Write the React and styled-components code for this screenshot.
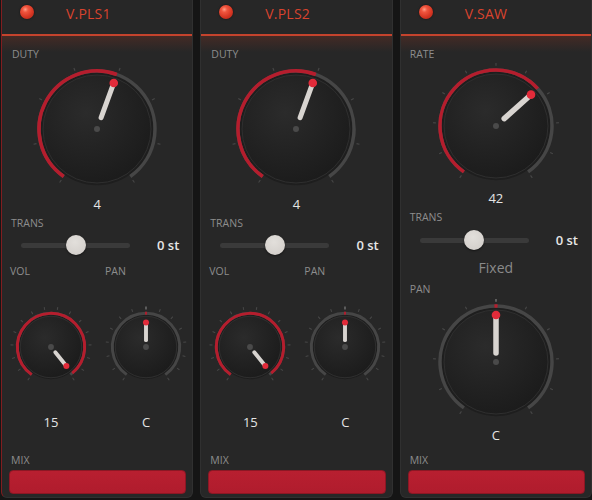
import React, { useId } from 'react';
import styled, { createGlobalStyle } from 'styled-components';

const GlobalStyle = createGlobalStyle`
  html, body { margin: 0; padding: 0; background: #151515; }
  body { font-family: "Open Sans", "Noto Sans", sans-serif; -webkit-font-smoothing: antialiased; }
  * { box-sizing: border-box; }
`;

const Rack = styled.div`
  display: flex;
  gap: 7px;
  height: 500px;
  padding: 0 0 2px 1px;
  background: #151515;
  overflow: hidden;
`;

const Panel = styled.section`
  flex: 1 1 0;
  min-width: 0;
  display: flex;
  flex-direction: column;
  background: #272727;
  border: 1px solid #303030;
  border-top: none;
  border-left-color: ${p => (p.$selected ? '#801d1f' : '#303030')};
  border-radius: 0 0 6px 6px;
  padding-bottom: 3px;
`;

const Header = styled.header`
  height: 36px;
  flex: 0 0 auto;
  display: flex;
  align-items: flex-start;
  padding: 5px 0 0 18px;
  border-bottom: 2px solid #c4432d;
`;

const Led = styled.span`
  width: 14px;
  height: 14px;
  border-radius: 50%;
  flex: 0 0 auto;
  background: radial-gradient(circle at 38% 32%, #ff9c86 0, #f0553e 22%, #d53522 60%, #a8261a 100%);
  box-shadow: 0 0 2px rgba(0, 0, 0, 0.6);
`;

const Title = styled.h2`
  margin: -1px 0 0 32px;
  font-size: 14px;
  line-height: 20px;
  font-weight: 500;
  color: #d9432e;
  letter-spacing: 0.2px;
`;

const Body = styled.div`
  flex: 1 1 auto;
  display: flex;
  flex-direction: column;
  background: linear-gradient(180deg, rgba(120, 48, 34, 0.35) 0, rgba(39, 39, 39, 0) 16px);
`;

const Label = styled.div`
  font-size: 10.5px;
  line-height: 14px;
  color: #8d8d8d;
  padding-left: ${p => p.$inset ?? 9}px;
  margin-top: ${p => p.$mt || 0}px;
`;

const KnobWrap = styled.div`
  display: flex;
  justify-content: center;
  margin-top: ${p => p.$mt || 0}px;
  & > svg { display: block; }
`;

const Value = styled.div`
  text-align: center;
  font-size: 13px;
  line-height: 18px;
  font-weight: 500;
  color: #e4e4e4;
  margin-top: ${p => p.$mt || 0}px;
`;

const Note = styled.div`
  text-align: center;
  font-size: 14px;
  line-height: 19px;
  color: #8a8a8a;
  margin-top: ${p => p.$mt || 0}px;
`;

const SliderRow = styled.div`
  display: flex;
  align-items: center;
  height: 20px;
  padding: 0 13px 0 ${p => p.$inset ?? 19}px;
  margin-top: ${p => p.$mt || 0}px;
`;

const Track = styled.div`
  position: relative;
  width: 109px;
  height: 5px;
  border-radius: 3px;
  background: #3a3a3a;
`;

const Thumb = styled.span`
  position: absolute;
  top: 50%;
  width: 20px;
  height: 20px;
  margin: -10px 0 0 -10px;
  border-radius: 50%;
  background: radial-gradient(circle at 45% 35%, #e2dfdb 0, #d5d1cd 70%, #c6c2be 100%);
  box-shadow: 0 1px 2px rgba(0, 0, 0, 0.5);
`;

const SliderValue = styled.span`
  margin-left: auto;
  font-size: 13px;
  font-weight: 600;
  color: #e6e6e6;
  white-space: nowrap;
`;

const Pair = styled.div`
  display: grid;
  grid-template-columns: 82px 82px;
  column-gap: 13px;
  padding-left: 8px;
  margin-top: ${p => p.$mt || 0}px;
`;

const PairCol = styled.div`
  display: flex;
  flex-direction: column;
`;

const Mix = styled.div`
  margin-top: auto;
  display: flex;
  flex-direction: column;
`;

const MixBar = styled.div`
  height: 24px;
  margin: 3px 6px 0 7px;
  border-radius: 4px;
  background: linear-gradient(180deg, #b81f30 0, #b01c2d 100%);
  border: 1px solid #8c1724;
`;

const SWEEP = 145;

function Knob({ size, r, stroke = 3.5, bodyR, value, mode = 'min', ticks, pStart, pEnd, pWidth, dotR, dotAt }) {
  const gid = useId().replace(/:/g, '');
  const c = size / 2;
  const angle = -SWEEP + value * 2 * SWEEP;
  const pt = (rad, deg) => {
    const a = ((deg - 90) * Math.PI) / 180;
    return [c + rad * Math.cos(a), c + rad * Math.sin(a)];
  };
  const arc = (rad, a0, a1) => {
    const [x0, y0] = pt(rad, a0);
    const [x1, y1] = pt(rad, a1);
    const large = a1 - a0 > 180 ? 1 : 0;
    return `M${x0.toFixed(2)} ${y0.toFixed(2)} A${rad} ${rad} 0 ${large} 1 ${x1.toFixed(2)} ${y1.toFixed(2)}`;
  };
  let a0, a1;
  if (mode === 'center') {
    a0 = Math.min(0, angle);
    a1 = Math.max(0, angle);
    if (a1 - a0 < 3) { a0 -= 1.6; a1 += 1.6; }
  } else {
    a0 = -SWEEP;
    a1 = angle;
  }
  const tickList = [];
  for (let i = 0; i < ticks; i++) {
    const d = -SWEEP + (i * 2 * SWEEP) / (ticks - 1);
    const [x0, y0] = pt(r + stroke / 2 + 2.5, d);
    const [x1, y1] = pt(r + stroke / 2 + 5.5, d);
    const centre = mode === 'center' && Math.abs(d) < 0.5;
    tickList.push(
      <line key={i} x1={x0} y1={y0} x2={x1} y2={y1} stroke={centre ? '#8a8a8a' : '#474747'} strokeWidth="1.1" />
    );
  }
  const [ps, pss] = pt(pStart, angle);
  const [pe, pee] = pt(pEnd, angle);
  const [dx, dy] = pt(dotAt, angle);
  return (
    <svg width={size} height={size} viewBox={`0 0 ${size} ${size}`}>
      <defs>
        <radialGradient id={gid} cx="40%" cy="35%" r="70%">
          <stop offset="0" stopColor="#2b2b2b" />
          <stop offset="1" stopColor="#1b1b1b" />
        </radialGradient>
      </defs>
      {tickList}
      <circle cx={c} cy={c} r={r - stroke / 2} fill="#1e1e1e" />
      <path d={arc(r, -SWEEP, SWEEP)} fill="none" stroke="#464646" strokeWidth={stroke} />
      <path d={arc(r, a0, a1)} fill="none" stroke="#b51d2d" strokeWidth={stroke} />
      <circle cx={c} cy={c} r={bodyR} fill={`url(#${gid})`} stroke="#2f2f2f" strokeWidth="1" />
      <circle cx={c} cy={c} r="3" fill="#4a4a4a" />
      <line x1={ps} y1={pss} x2={pe} y2={pee} stroke="#d8d4d0" strokeWidth={pWidth} strokeLinecap="round" />
      <circle cx={dx} cy={dy} r={dotR} fill="#e22b3a" />
    </svg>
  );
}

const BigKnob = ({ value, ticks, mode, small }) =>
  small ? (
    <Knob size={126} r={56} bodyR={52} value={value} ticks={ticks} mode={mode} pStart={mode === 'center' ? 9 : 11} pEnd={45} pWidth={5.5} dotR={4.3} dotAt={47} />
  ) : (
    <Knob size={132} r={58} bodyR={54} value={value} ticks={ticks} mode={mode} pStart={12} pEnd={47} pWidth={5} dotR={4.3} dotAt={49} />
  );

const SmallKnob = ({ value, ticks, mode }) => (
  <Knob size={84} r={34.5} stroke={3} bodyR={31.5} value={value} ticks={ticks} mode={mode} pStart={7} pEnd={23} pWidth={4} dotR={3.1} dotAt={25} />
);

function Slider({ value, label, mt }) {
  return (
    <SliderRow $mt={mt}>
      <Track>
        <Thumb style={{ left: `${value * 100}%` }} />
      </Track>
      <SliderValue>{label}</SliderValue>
    </SliderRow>
  );
}

function MixSection() {
  return (
    <Mix>
      <Label>MIX</Label>
      <MixBar />
    </Mix>
  );
}

function PulseVoice({ name, selected }) {
  return (
    <Panel $selected={selected}>
      <Header>
        <Led />
        <Title>{name}</Title>
      </Header>
      <Body>
        <Label $mt={11} $inset={10}>DUTY</Label>
        <KnobWrap $mt={2}>
          <BigKnob value={0.569} ticks={8} />
        </KnobWrap>
        <Value>4</Value>
        <Label $mt={3}>TRANS</Label>
        <Slider value={0.5} label="0 st" mt={5} />
        <Pair $mt={9}>
          <PairCol>
            <Label $inset={0}>VOL</Label>
            <KnobWrap $mt={27}>
              <SmallKnob value={0.986} ticks={16} />
            </KnobWrap>
            <Value $mt={24}>15</Value>
          </PairCol>
          <PairCol>
            <Label $inset={0}>PAN</Label>
            <KnobWrap $mt={27}>
              <SmallKnob value={0.5} ticks={15} mode="center" />
            </KnobWrap>
            <Value $mt={24}>C</Value>
          </PairCol>
        </Pair>
        <MixSection />
      </Body>
    </Panel>
  );
}

function SawVoice() {
  return (
    <Panel>
      <Header>
        <Led />
        <Title>V.SAW</Title>
      </Header>
      <Body>
        <Label $mt={11}>RATE</Label>
        <KnobWrap $mt={2}>
          <BigKnob small value={0.666} ticks={11} />
        </KnobWrap>
        <Value>42</Value>
        <Label $mt={3}>TRANS</Label>
        <Slider value={0.5} label="0 st" mt={6} />
        <Note $mt={8}>Fixed</Note>
        <Label $mt={5}>PAN</Label>
        <KnobWrap $mt={3}>
          <BigKnob small value={0.5} ticks={11} mode="center" />
        </KnobWrap>
        <Value $mt={1}>C</Value>
        <MixSection />
      </Body>
    </Panel>
  );
}

export default function App() {
  return (
    <>
      <GlobalStyle />
      <Rack>
        <PulseVoice name="V.PLS1" selected />
        <PulseVoice name="V.PLS2" />
        <SawVoice />
      </Rack>
    </>
  );
}
